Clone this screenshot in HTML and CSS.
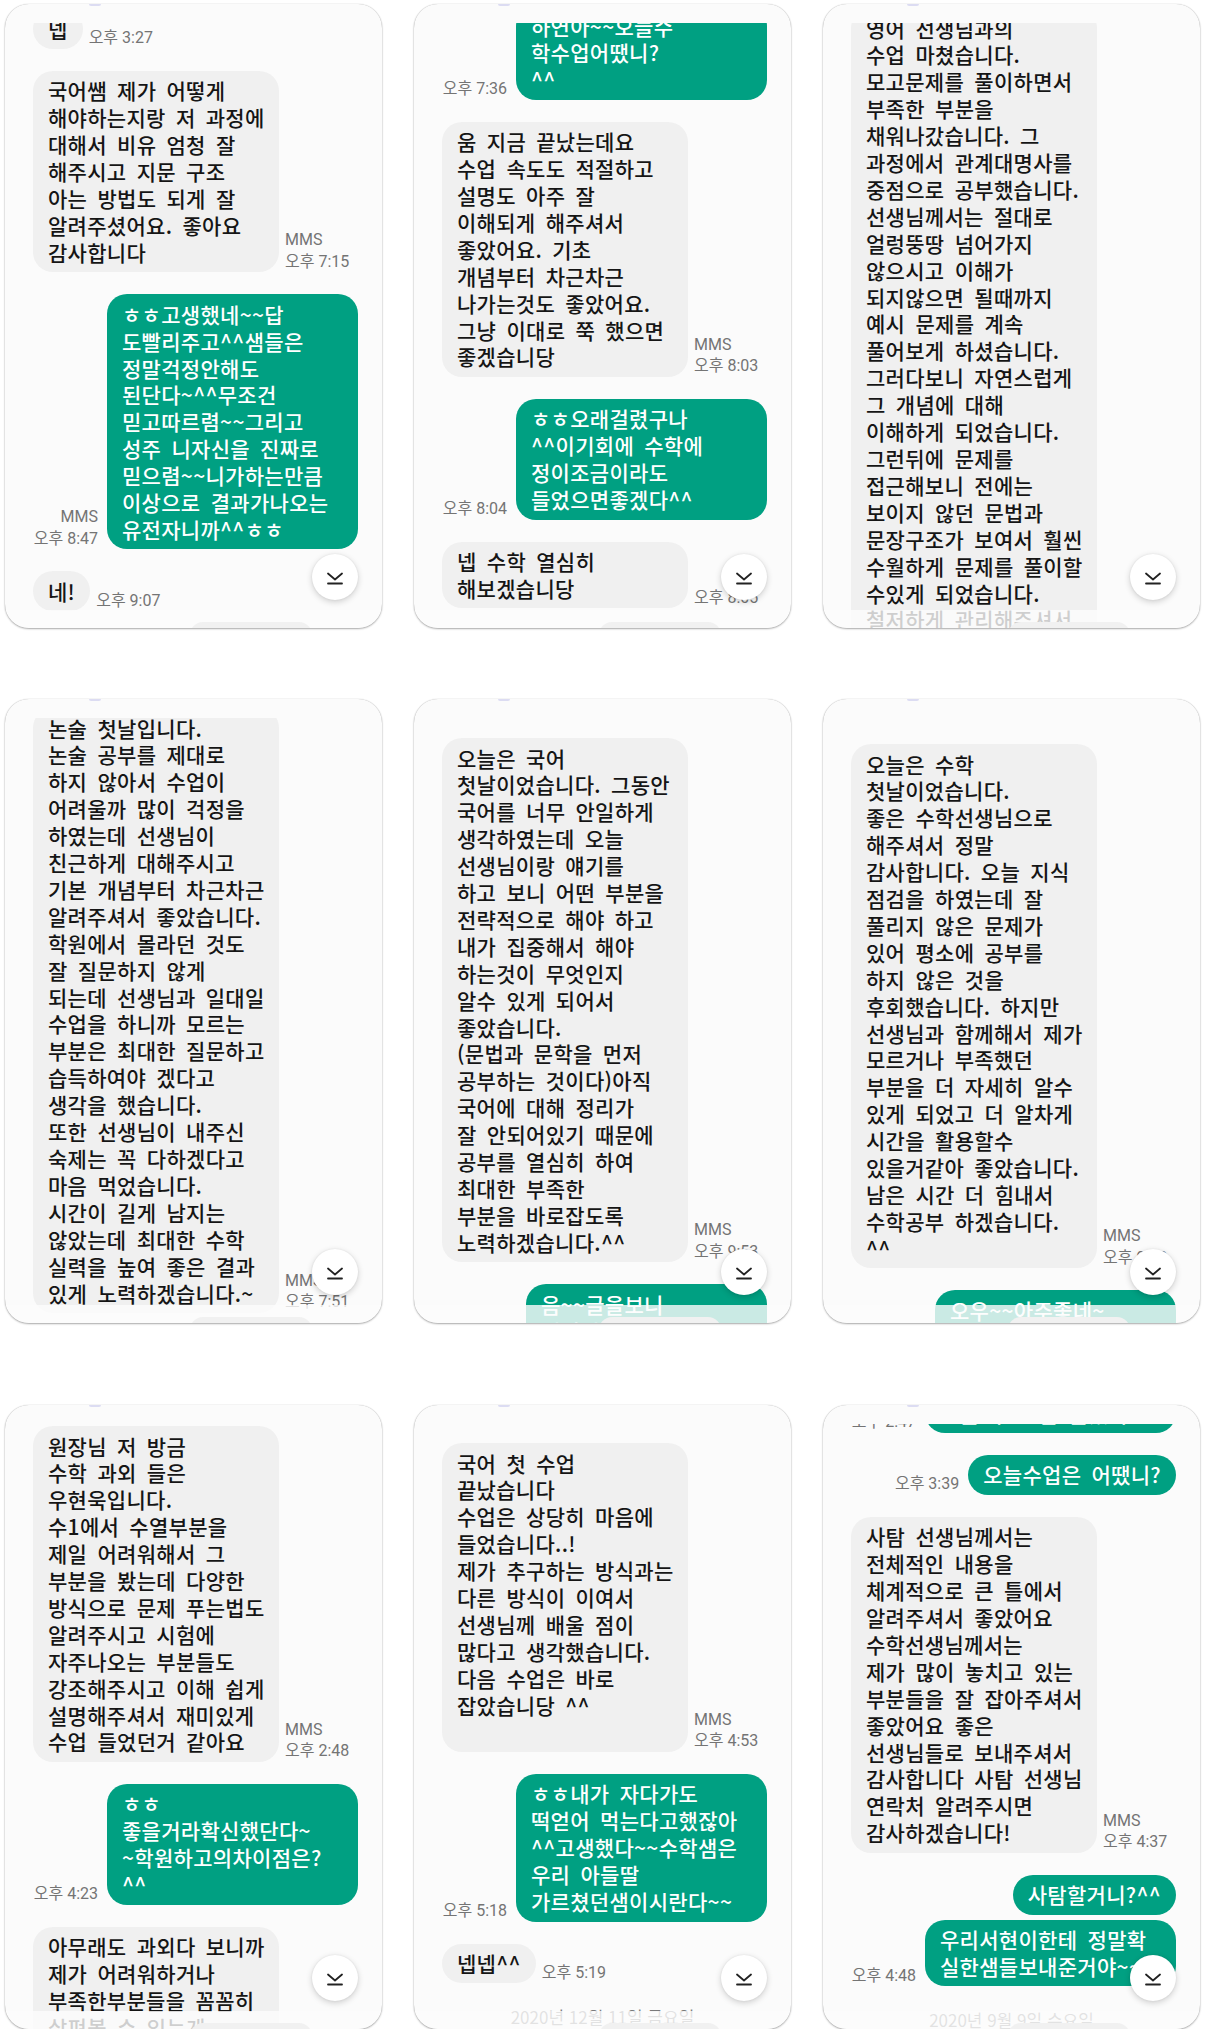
FILE: index.html
```html
<!DOCTYPE html>
<html lang="ko">
<head>
<meta charset="utf-8">
<title>수업 후기</title>
<link rel="stylesheet" href="styles.css">
</head>
<body>
<main class="sheet">
  <div class="row">
    <!-- card 1 -->
    <section class="card">
      <span class="notch"></span>
      <div class="screen">
        <div class="msg in off-14"><div class="bubble">넵</div><div class="meta"><span>오후 3:27</span></div></div>
        <div class="msg in"><div class="bubble wide">국어쌤 제가 어떻게<br>해야하는지랑 저 과정에<br>대해서 비유 엄청 잘<br>해주시고 지문 구조<br>아는 방법도 되게 잘<br>알려주셨어요. 좋아요<br>감사합니다</div><div class="meta"><span>MMS</span><span>오후 7:15</span></div></div>
        <div class="msg out"><div class="meta"><span>MMS</span><span>오후 8:47</span></div><div class="bubble wide">ㅎㅎ고생했네~~답<br>도빨리주고^^샘들은<br>정말걱정안해도<br>된단다~^^무조건<br>믿고따르렴~~그리고<br>성주 니자신을 진짜로<br>믿으렴~~니가하는만큼<br>이상으로 결과가나오는<br>유전자니까^^ㅎㅎ</div></div>
        <div class="msg in"><div class="bubble">네!</div><div class="meta"><span>오후 9:07</span></div></div>
      </div>
      <span class="pill"></span>
      <span class="fade"></span>
      <span class="fab"><svg viewBox="0 0 16 13" width="16" height="13"><polyline points="1,1.5 8,7.5 15,1.5"/><line x1="1" y1="11.5" x2="15" y2="11.5"/></svg></span>
    </section>
    <!-- card 2 -->
    <section class="card">
      <span class="notch"></span>
      <div class="screen">
        <div class="msg out off-17"><div class="meta"><span>오후 7:36</span></div><div class="bubble wide">하연아~~오늘수<br>학수업어땠니?<br>^^</div></div>
        <div class="msg in"><div class="bubble wide">움 지금 끝났는데요<br>수업 속도도 적절하고<br>설명도 아주 잘<br>이해되게 해주셔서<br>좋았어요. 기초<br>개념부터 차근차근<br>나가는것도 좋았어요.<br>그냥 이대로 쭉 했으면<br>좋겠습니당</div><div class="meta"><span>MMS</span><span>오후 8:03</span></div></div>
        <div class="msg out"><div class="meta"><span>오후 8:04</span></div><div class="bubble wide">ㅎㅎ오래걸렸구나<br>^^이기회에 수학에<br>정이조금이라도<br>들었으면좋겠다^^</div></div>
        <div class="msg in"><div class="bubble wide">넵 수학 열심히<br>해보겠습니당</div><div class="meta"><span>오후 8:05</span></div></div>
      </div>
      <span class="pill"></span>
      <span class="fade"></span>
      <span class="fab"><svg viewBox="0 0 16 13" width="16" height="13"><polyline points="1,1.5 8,7.5 15,1.5"/><line x1="1" y1="11.5" x2="15" y2="11.5"/></svg></span>
    </section>
    <!-- card 3 -->
    <section class="card">
      <span class="notch"></span>
      <div class="screen">
        <div class="msg in off-15"><div class="bubble wide">영어 선생님과의<br>수업 마쳤습니다.<br>모고문제를 풀이하면서<br>부족한 부분을<br>채워나갔습니다. 그<br>과정에서 관계대명사를<br>중점으로 공부했습니다.<br>선생님께서는 절대로<br>얼렁뚱땅 넘어가지<br>않으시고 이해가<br>되지않으면 될때까지<br>예시 문제를 계속<br>풀어보게 하셨습니다.<br>그러다보니 자연스럽게<br>그 개념에 대해<br>이해하게 되었습니다.<br>그런뒤에 문제를<br>접근해보니 전에는<br>보이지 않던 문법과<br>문장구조가 보여서 훨씬<br>수월하게 문제를 풀이할<br>수있게 되었습니다.<br>철저하게 관리해주셔서<br>감사합니다.</div></div>
      </div>
      <span class="pill"></span>
      <span class="fade"></span>
      <span class="fab"><svg viewBox="0 0 16 13" width="16" height="13"><polyline points="1,1.5 8,7.5 15,1.5"/><line x1="1" y1="11.5" x2="15" y2="11.5"/></svg></span>
    </section>
  </div>

  <div class="row row2">
    <!-- card 4 -->
    <section class="card">
      <span class="notch"></span>
      <div class="screen">
        <div class="msg in off-10"><div class="bubble wide">논술 첫날입니다.<br>논술 공부를 제대로<br>하지 않아서 수업이<br>어려울까 많이 걱정을<br>하였는데 선생님이<br>친근하게 대해주시고<br>기본 개념부터 차근차근<br>알려주셔서 좋았습니다.<br>학원에서 몰라던 것도<br>잘 질문하지 않게<br>되는데 선생님과 일대일<br>수업을 하니까 모르는<br>부분은 최대한 질문하고<br>습득하여야 겠다고<br>생각을 했습니다.<br>또한 선생님이 내주신<br>숙제는 꼭 다하겠다고<br>마음 먹었습니다.<br>시간이 길게 남지는<br>않았는데 최대한 수학<br>실력을 높여 좋은 결과<br>있게 노력하겠습니다.~</div><div class="meta"><span>MMS</span><span>오후 7:51</span></div></div>
      </div>
      <span class="pill"></span>
      <span class="fade"></span>
      <span class="fab"><svg viewBox="0 0 16 13" width="16" height="13"><polyline points="1,1.5 8,7.5 15,1.5"/><line x1="1" y1="11.5" x2="15" y2="11.5"/></svg></span>
    </section>
    <!-- card 5 -->
    <section class="card">
      <span class="notch"></span>
      <div class="screen">
        <div class="msg in off20"><div class="bubble wide">오늘은 국어<br>첫날이었습니다. 그동안<br>국어를 너무 안일하게<br>생각하였는데 오늘<br>선생님이랑 얘기를<br>하고 보니 어떤 부분을<br>전략적으로 해야 하고<br>내가 집중해서 해야<br>하는것이 무엇인지<br>알수 있게 되어서<br>좋았습니다.<br>(문법과 문학을 먼저<br>공부하는 것이다)아직<br>국어에 대해 정리가<br>잘 안되어있기 때문에<br>공부를 열심히 하여<br>최대한 부족한<br>부분을 바로잡도록<br>노력하겠습니다.^^</div><div class="meta"><span>MMS</span><span>오후 9:53</span></div></div>
        <div class="msg out"><div class="bubble mid">음~~글을보니<br>열심히 했구나~~</div></div>
      </div>
      <span class="pill"></span>
      <span class="fade"></span>
      <span class="fab"><svg viewBox="0 0 16 13" width="16" height="13"><polyline points="1,1.5 8,7.5 15,1.5"/><line x1="1" y1="11.5" x2="15" y2="11.5"/></svg></span>
    </section>
    <!-- card 6 -->
    <section class="card">
      <span class="notch"></span>
      <div class="screen">
        <div class="msg in off26"><div class="bubble wide">오늘은 수학<br>첫날이었습니다.<br>좋은 수학선생님으로<br>해주셔서 정말<br>감사합니다. 오늘 지식<br>점검을 하였는데 잘<br>풀리지 않은 문제가<br>있어 평소에 공부를<br>하지 않은 것을<br>후회했습니다. 하지만<br>선생님과 함께해서 제가<br>모르거나 부족했던<br>부분을 더 자세히 알수<br>있게 되었고 더 알차게<br>시간을 활용할수<br>있을거같아 좋았습니다.<br>남은 시간 더 힘내서<br>수학공부 하겠습니다.<br>^^</div><div class="meta"><span>MMS</span><span>오후 9:40</span></div></div>
        <div class="msg out"><div class="bubble mid">오우~~아주좋네~<br>열심히 하자~~</div></div>
      </div>
      <span class="pill"></span>
      <span class="fade"></span>
      <span class="fab"><svg viewBox="0 0 16 13" width="16" height="13"><polyline points="1,1.5 8,7.5 15,1.5"/><line x1="1" y1="11.5" x2="15" y2="11.5"/></svg></span>
    </section>
  </div>

  <div class="row row3">
    <!-- card 7 -->
    <section class="card">
      <span class="notch"></span>
      <div class="screen">
        <div class="msg in off2"><div class="bubble wide">원장님 저 방금<br>수학 과외 들은<br>우현욱입니다.<br>수1에서 수열부분을<br>제일 어려워해서 그<br>부분을 봤는데 다양한<br>방식으로 문제 푸는법도<br>알려주시고 시험에<br>자주나오는 부분들도<br>강조해주시고 이해 쉽게<br>설명해주셔서 재미있게<br>수업 들었던거 같아요</div><div class="meta"><span>MMS</span><span>오후 2:48</span></div></div>
        <div class="msg out"><div class="meta"><span>오후 4:23</span></div><div class="bubble wide">ㅎㅎ<br>좋을거라확신했단다~<br>~학원하고의차이점은?<br>^^</div></div>
        <div class="msg in"><div class="bubble wide">아무래도 과외다 보니까<br>제가 어려워하거나<br>부족한부분들을 꼼꼼히<br>살펴볼 수 있는게<br>좋은 것 같아요</div></div>
      </div>
      <span class="pill"></span>
      <span class="fade"></span>
      <span class="fab"><svg viewBox="0 0 16 13" width="16" height="13"><polyline points="1,1.5 8,7.5 15,1.5"/><line x1="1" y1="11.5" x2="15" y2="11.5"/></svg></span>
    </section>
    <!-- card 8 -->
    <section class="card">
      <span class="notch"></span>
      <div class="screen">
        <div class="msg in off19"><div class="bubble wide">국어 첫 수업<br>끝났습니다<br>수업은 상당히 마음에<br>들었습니다..!<br>제가 추구하는 방식과는<br>다른 방식이 이여서<br>선생님께 배울 점이<br>많다고 생각했습니다.<br>다음 수업은 바로<br>잡았습니당 ^^<br>&nbsp;</div><div class="meta"><span>MMS</span><span>오후 4:53</span></div></div>
        <div class="msg out"><div class="meta"><span>오후 5:18</span></div><div class="bubble wide">ㅎㅎ내가 자다가도<br>떡얻어 먹는다고했잖아<br>^^고생했다~~수학샘은<br>우리 아들딸<br>가르쳤던샘이시란다~~</div></div>
        <div class="msg in"><div class="bubble">넵넵^^</div><div class="meta"><span>오후 5:19</span></div></div>
        <div class="date">2020년 12월 11일 금요일</div>
      </div>
      <span class="pill"></span>
      <span class="fade"></span>
      <span class="fab"><svg viewBox="0 0 16 13" width="16" height="13"><polyline points="1,1.5 8,7.5 15,1.5"/><line x1="1" y1="11.5" x2="15" y2="11.5"/></svg></span>
    </section>
    <!-- card 9 -->
    <section class="card">
      <span class="notch"></span>
      <div class="screen">
        <div class="msg out off-31"><div class="meta"><span>오후 2:47</span></div><div class="bubble wide">오늘 수업 잘 들었니?</div></div>
        <div class="msg out"><div class="meta"><span>오후 3:39</span></div><div class="bubble">오늘수업은 어땠니?</div></div>
        <div class="msg in"><div class="bubble wide">사탐 선생님께서는<br>전체적인 내용을<br>체계적으로 큰 틀에서<br>알려주셔서 좋았어요<br>수학선생님께서는<br>제가 많이 놓치고 있는<br>부분들을 잘 잡아주셔서<br>좋았어요 좋은<br>선생님들로 보내주셔서<br>감사합니다 사탐 선생님<br>연락처 알려주시면<br>감사하겠습니다!</div><div class="meta"><span>MMS</span><span>오후 4:37</span></div></div>
        <div class="msg out"><div class="bubble">사탐할거니?^^</div></div>
        <div class="msg out grouped"><div class="meta"><span>오후 4:48</span></div><div class="bubble wide">우리서현이한테 정말확<br>실한샘들보내준거야~~</div></div>
        <div class="date">2020년 9월 9일 수요일</div>
      </div>
      <span class="pill"></span>
      <span class="fade"></span>
      <span class="fab"><svg viewBox="0 0 16 13" width="16" height="13"><polyline points="1,1.5 8,7.5 15,1.5"/><line x1="1" y1="11.5" x2="15" y2="11.5"/></svg></span>
    </section>
  </div>
</main>
</body>
</html>
```

FILE: styles.css
```css
* { box-sizing: border-box; }

html, body {
  margin: 0;
  padding: 0;
  background: #ffffff;
}

body {
  font-family: "Noto Sans CJK KR", "Noto Sans", sans-serif;
  color: #1a1a1a;
}

.sheet {
  width: 1205px;
  padding: 4px 5px 0 5px;
}

.row {
  display: grid;
  grid-template-columns: repeat(3, 377px);
  column-gap: 32px;
}

.row2 { margin-top: 71px; }
.row3 { margin-top: 82px; }

.card {
  position: relative;
  height: 624px;
  padding-top: 19px;
  border-radius: 24px;
  background: #fbfbfb;
  overflow: hidden;
  box-shadow: 0 1px 2px rgba(0, 0, 0, 0.32), 0 0 1px rgba(0, 0, 0, 0.28);
}

.screen {
  height: 100%;
  overflow: hidden;
}

.notch {
  position: absolute;
  top: 0;
  left: 84px;
  width: 12px;
  height: 2px;
  border-radius: 0 0 4px 4px;
  background: #dcdcf2;
}

.msg {
  display: flex;
  align-items: flex-end;
}

.msg + .msg { margin-top: 22px; }
.msg.grouped { margin-top: 5px; }

.msg.in {
  padding-left: 28px;
  gap: 6px;
}

.msg.out {
  justify-content: flex-end;
  padding-right: 24px;
  gap: 9px;
}

.bubble {
  font-size: 21px;
  font-weight: 500;
  line-height: 26.9px;
  letter-spacing: 0.3px;
  word-spacing: 4px;
  white-space: nowrap;
  padding: 6.5px 15px;
  border-radius: 20px;
  flex: none;
}

.in .bubble {
  background: #f0f0f0;
  color: #151515;
}

.out .bubble {
  background: #00a082;
  color: #ffffff;
}

.in .bubble.wide { width: 246px; }
.out .bubble.wide { width: 251px; }
.out .bubble.mid { width: 241px; }

.meta {
  display: flex;
  flex-direction: column;
  font-family: "Roboto", "Noto Sans CJK KR", sans-serif;
  font-size: 16px;
  line-height: 21.5px;
  color: #747474;
  white-space: nowrap;
}

.out .meta { align-items: flex-end; }

.off-14 { margin-top: -14px; }
.off-17 { margin-top: -17px; }
.off-15 { margin-top: -15px; }
.off-10 { margin-top: -10px; }
.off-31 { margin-top: -31px; }
.off2 { margin-top: 2px; }
.off19 { margin-top: 19px; }
.off20 { margin-top: 20px; }
.off26 { margin-top: 26px; }

.date {
  margin-top: 24px;
  text-align: center;
  font-size: 17px;
  line-height: 20px;
  color: #7a7a7a;
}

.fade {
  position: absolute;
  left: 0;
  right: 0;
  bottom: 0;
  height: 18px;
  background: rgba(252, 252, 252, 0.8);
}

.pill {
  position: absolute;
  left: 185px;
  width: 122px;
  bottom: -20px;
  height: 26px;
  border-radius: 13px;
  background: #f1f1f1;
  z-index: 1;
}

.fab {
  position: absolute;
  right: 24px;
  bottom: 28px;
  width: 46px;
  height: 46px;
  border-radius: 50%;
  background: #ffffff;
  box-shadow: 0 2px 6px rgba(0, 0, 0, 0.18), 0 0 2px rgba(0, 0, 0, 0.08);
  display: flex;
  align-items: center;
  justify-content: center;
  z-index: 2;
}

.fab svg {
  fill: none;
  stroke: #222222;
  stroke-width: 1.8;
  stroke-linecap: round;
  stroke-linejoin: round;
  margin-top: 2px;
}
```
